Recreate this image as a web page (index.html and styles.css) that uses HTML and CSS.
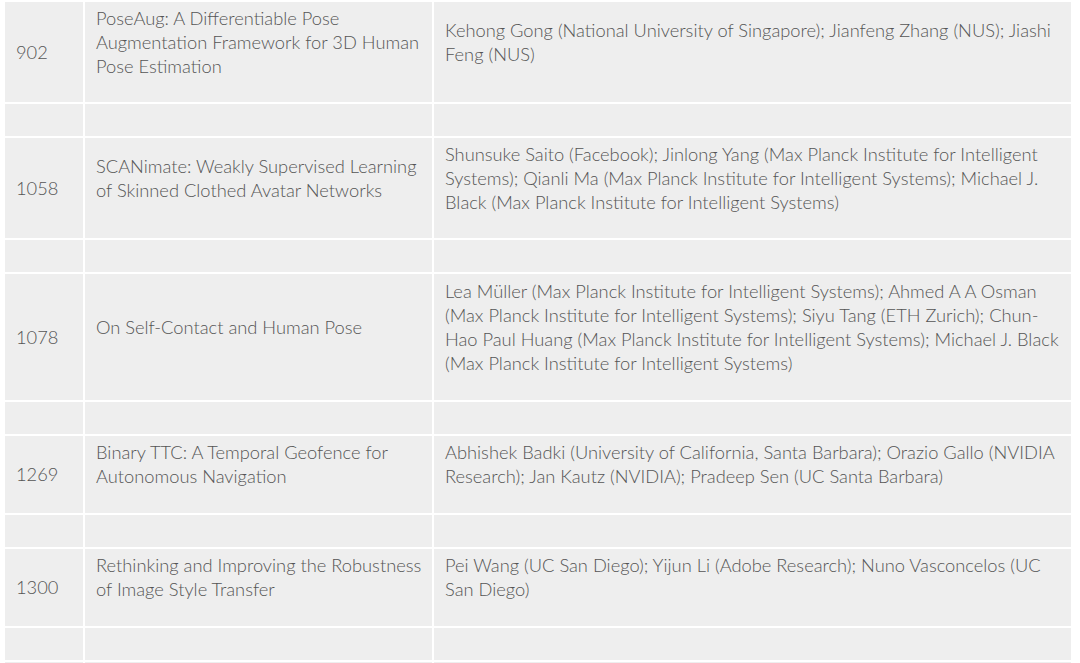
FILE: index.html
```html
<!DOCTYPE html>
<html>
<head>
<meta charset="utf-8">
<link rel="stylesheet" href="styles.css">
</head>
<body>
<div class="wrap">
<table class="papers">
<colgroup><col class="c-id"><col class="c-title"><col class="c-auth"></colgroup>
<tbody>
<tr><td class="id">902</td><td><p>PoseAug: A Differentiable Pose Augmentation Framework for 3D Human Pose Estimation</p></td><td><p>Kehong Gong (National University of Singapore); Jianfeng Zhang (NUS); Jiashi Feng (NUS)</p></td></tr>
<tr class="blank"><td>&nbsp;</td><td>&nbsp;</td><td>&nbsp;</td></tr>
<tr><td class="id">1058</td><td><p>SCANimate: Weakly Supervised Learning of Skinned Clothed Avatar Networks</p></td><td><p>Shunsuke Saito (Facebook); Jinlong Yang (Max Planck Institute for Intelligent Systems); Qianli Ma (Max Planck Institute for Intelligent Systems); Michael J. Black (Max Planck Institute for Intelligent Systems)</p></td></tr>
<tr class="blank"><td>&nbsp;</td><td>&nbsp;</td><td>&nbsp;</td></tr>
<tr class="tall"><td class="id">1078</td><td><p>On Self-Contact and Human Pose</p></td><td><p>Lea Müller (Max Planck Institute for Intelligent Systems); Ahmed A A Osman (Max Planck Institute for Intelligent Systems); Siyu Tang (ETH Zurich); Chun-Hao Paul Huang (Max Planck Institute for Intelligent Systems); Michael J. Black (Max Planck Institute for Intelligent Systems)</p></td></tr>
<tr class="blank"><td>&nbsp;</td><td>&nbsp;</td><td>&nbsp;</td></tr>
<tr class="short"><td class="id">1269</td><td><p>Binary TTC: A Temporal Geofence for Autonomous Navigation</p></td><td><p>Abhishek Badki (University of California, Santa Barbara); Orazio Gallo (NVIDIA Research); Jan Kautz (NVIDIA); Pradeep Sen (UC Santa Barbara)</p></td></tr>
<tr class="blank"><td>&nbsp;</td><td>&nbsp;</td><td>&nbsp;</td></tr>
<tr class="short"><td class="id">1300</td><td><p>Rethinking and Improving the Robustness of Image Style Transfer</p></td><td><p>Pei Wang (UC San Diego); Yijun Li (Adobe Research); Nuno Vasconcelos (UC San Diego)</p></td></tr>
<tr class="blank"><td>&nbsp;</td><td>&nbsp;</td><td>&nbsp;</td></tr>
<tr class="blank"><td>&nbsp;</td><td>&nbsp;</td><td>&nbsp;</td></tr>
</tbody>
</table>
</div>
</body>
</html>
```

FILE: styles.css
```css
html, body {
  margin: 0;
  padding: 0;
  background: #ffffff;
}
.wrap {
  padding: 0 7px 0 3px;
}
.papers {
  border-collapse: separate;
  border-spacing: 2px;
  table-layout: fixed;
  width: 1070px;
  font-family: Lato, "Open Sans", sans-serif;
  font-weight: 300;
  font-size: 18.3px;
  line-height: 24px;
  color: #555555;
}
.c-id { width: 78px; }
.c-title { width: 347px; }
.c-auth { width: 637px; }
.papers td {
  background: #eeeeee;
  padding: 4px 10px 4px 11px;
  vertical-align: middle;
}
.papers .tall td {
  padding-top: 5px;
  padding-bottom: 5px;
}
.papers .short td {
  padding-top: 4px;
  padding-bottom: 5px;
}
.papers p {
  margin: 0 0 20px 0;
}
```
